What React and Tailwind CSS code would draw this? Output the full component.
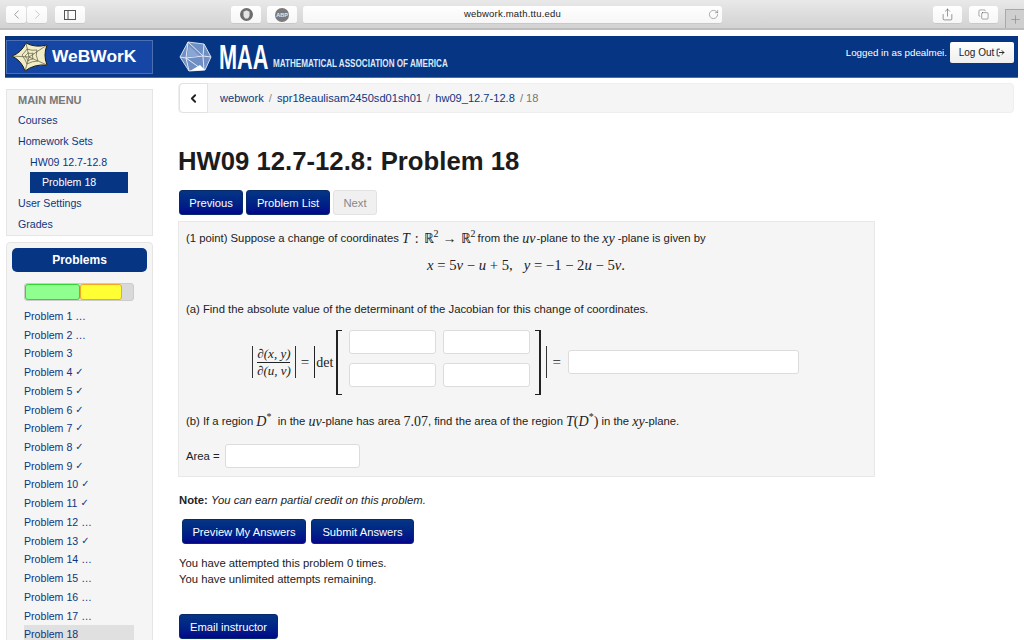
import React from "react";
import { ChevronLeft, ChevronRight, RotateCw, Share, Copy, Plus, LogOut } from "lucide-react";

const sans = "font-['Liberation_Sans',Arial,sans-serif]";
const M = ({ children, className = "" }) => (
  <span className={`font-['Liberation_Serif',serif] italic text-[14px] ${className}`}>{children}</span>
);
const R = ({ children, className = "" }) => (
  <span className={`font-['Liberation_Serif',serif] text-[14px] ${className}`}>{children}</span>
);
const Sup = ({ children }) => (
  <span className="font-['Liberation_Serif',serif] text-[10px] relative -top-[5px]">{children}</span>
);

function ToolBtn({ children, className = "" }) {
  return (
    <div className={`h-[18px] rounded-[3px] bg-gradient-to-b from-white to-[#f6f6f6] border-b border-[#c8c8c8] flex items-center justify-center ${className}`}>
      {children}
    </div>
  );
}

function Star() {
  return (
    <svg width="36" height="30" viewBox="0 0 36 30" className="shrink-0">
      <path d="M0 14 Q9 11 14 1 Q23 6 35 3 Q31 13 35 23 Q22 22 13 29 Q10 19 0 14 Z" fill="#f1edc6" stroke="#1c1c18" strokeWidth="1" strokeLinejoin="round" />
      <path d="M0 14 L17 15 M14 1 L17 15 M35 3 L17 15 M35 23 L17 15 M13 29 L17 15 M10 13 Q13 10 15 7 Q20 9 25 8 Q23 13 26 19 Q20 19 15 22 Q13 17 10 13 Z M13 14 Q15 12 16 11 Q19 12 21 11 Q20 14 21 17 Q18 17 16 19 Q15 16 13 14 Z" fill="none" stroke="#5b5740" strokeWidth="0.7" />
    </svg>
  );
}

function Ico() {
  return (
    <svg width="33" height="31" viewBox="0 0 33 31" className="shrink-0">
      <path d="M9 1 L25 3 L32 16 L26 29 L10 30 L1 16 Z" fill="#6f8fc4" stroke="#d5dfef" strokeWidth="1" />
      <path d="M9 1 L7 17 L1 16 M9 1 L24 15 L25 3 M24 15 L7 17 L24 29 M24 15 L32 16 M24 15 L25 29 M7 17 L10 30" fill="none" stroke="#e3e9f4" strokeWidth="1" />
      <path d="M11 30 L26 29 L21 24 Z" fill="#ffffff" />
      <path d="M10 5 L21 15 L8 16 Z" fill="#8ba6d2" />
    </svg>
  );
}

function Toolbar() {
  return (
    <div className="h-[30px] bg-gradient-to-b from-[#e9e9e9] to-[#d2d2d2] border-b-2 border-[#bdbdbd] flex items-start pt-[6px] pl-[6px] relative">
      <ToolBtn className="w-[20px] mr-px"><ChevronLeft size={15} strokeWidth={1} color="#666" /></ToolBtn>
      <ToolBtn className="w-[20px] mr-[8px]"><ChevronRight size={15} strokeWidth={1} color="#aaa" /></ToolBtn>
      <ToolBtn className="w-[30px] mr-[146px]">
        <svg width="12" height="10" viewBox="0 0 12 10"><rect x="0.5" y="0.5" width="11" height="9" fill="none" stroke="#555" /><path d="M4 0.5 V9.5" stroke="#555" /></svg>
      </ToolBtn>
      <ToolBtn className="w-[30px] mr-[6px]">
        <svg width="13" height="13" viewBox="0 0 13 13">
          <circle cx="6.5" cy="6.5" r="6.5" fill="#6d6d6d" />
          <path d="M3.5 6 V3.5 H4.5 V3 H5.5 V2.5 H7.5 V3 H8.5 V3.5 H9.5 V8 L8 10.5 H5 L3.5 8 Z" fill="#e4e4e4" />
        </svg>
      </ToolBtn>
      <ToolBtn className="w-[30px] mr-[6px]">
        <div className="w-[14px] h-[14px] rounded-full bg-[#7a7a7a] text-[#e8e8e8] text-[5.5px] font-bold leading-[14px] text-center">ABP</div>
      </ToolBtn>
      <ToolBtn className="w-[419px] relative text-[9.5px] text-[#222] tracking-[0.2px]">
        webwork.math.ttu.edu
        <RotateCw size={11} strokeWidth={1} color="#555" className="absolute right-[3px] top-[3px]" />
      </ToolBtn>
      <ToolBtn className="w-[29px] ml-[211px]"><Share size={13} strokeWidth={1} color="#444" /></ToolBtn>
      <ToolBtn className="w-[29px] ml-[7px]"><Copy size={11} strokeWidth={1} color="#444" /></ToolBtn>
      <div className="absolute right-0 bottom-0 w-[19px] h-[19px] bg-[#cfcfcf] border-l border-t border-[#a9a9a9] flex items-center justify-center">
        <Plus size={13} strokeWidth={1} color="#777" />
      </div>
    </div>
  );
}

function Nav() {
  return (
    <div className="ml-[5px] mr-[6px] mt-[6px] h-[42px] bg-[#063583] flex items-center border-b border-[#4a6ca8] pl-px pr-[4px]">
      <div className="w-[147px] h-[34px] bg-[#1546a6] border border-[#4c6fb0] flex items-center pl-[5px] gap-[4px]">
        <Star />
        <span className="text-white font-bold text-[17.4px]">WeBWorK</span>
      </div>
      <div className="ml-[26px] flex items-center h-full">
        <Ico />
        <span className="ml-[7px] w-[49px] text-white font-bold text-[35px] leading-[34px] inline-block origin-left scale-x-[0.62]">MAA</span>
        <span className="ml-[5px] mt-[14px] w-[174px] whitespace-nowrap text-[#dfe7f3] font-bold text-[10px] inline-block origin-left scale-x-[0.81]">MATHEMATICAL ASSOCIATION OF AMERICA</span>
      </div>
      <div className="ml-auto flex items-center gap-[3px] -mt-[9px]">
        <span className="text-white text-[9.8px] mt-[2px]">Logged in as pdealmei.</span>
        <div className="w-[64px] h-[21px] rounded-[2px] bg-gradient-to-b from-white to-[#eeeeee] flex items-center justify-center gap-[2px] text-[#222] text-[10px]">
          Log Out <LogOut size={9} strokeWidth={2.5} />
        </div>
      </div>
    </div>
  );
}

function Sidebar() {
  const items = [
    ["Problem 1", "…"], ["Problem 2", "…"], ["Problem 3", ""], ["Problem 4", "c"], ["Problem 5", "c"], ["Problem 6", "c"],
    ["Problem 7", "c"], ["Problem 8", "c"], ["Problem 9", "c"], ["Problem 10", "c"], ["Problem 11", "c"], ["Problem 12", "…"],
    ["Problem 13", "c"], ["Problem 14", "…"], ["Problem 15", "…"], ["Problem 16", "…"], ["Problem 17", "…"],
  ];
  const link = "h-[20.8px] leading-[20.8px] text-[#0d3580]";
  return (
    <div className="w-[147px] ml-[6px] shrink-0">
      <div className="h-[147px] bg-[#f5f5f5] border border-[#e5e5e5] pl-[11px] text-[10.6px]">
        <div className="h-[20px] leading-[20px] font-bold text-[#777] text-[11px]">MAIN MENU</div>
        <div className={link}>Courses</div>
        <div className={link}>Homework Sets</div>
        <div className={`${link} pl-[12px]`}>HW09 12.7-12.8</div>
        <div className="h-[21px] leading-[21px] w-[98px] ml-[12px] bg-[#063583] text-white pl-[12px]">Problem 18</div>
        <div className={link}>User Settings</div>
        <div className={link}>Grades</div>
      </div>
      <div className="mt-[6px] h-[420px] bg-[#f5f5f5] border border-[#e5e5e5] rounded-t-[4px] pt-[5px] px-[5px]">
        <div className="h-[24px] leading-[24px] w-[135px] bg-[#063583] rounded-[5px] text-white font-bold text-[12px] text-center">Problems</div>
        <div className="mt-[11px] ml-[12px] w-[110px] h-[18px] rounded-[3px] bg-[#d9d9d9] border border-[#cccccc] flex">
          <div className="w-[55px] bg-[#8fff8f] border border-[#33d633] rounded-[3px]" />
          <div className="w-[42px] bg-[#ffff33] border border-[#f5a623] rounded-[3px]" />
        </div>
        <div className="mt-[6px] ml-[12px] w-[110px] text-[10.6px] text-[#0d3580]">
          {items.map(([t, s]) => (
            <div key={t} className="h-[18.72px] leading-[18.72px] flex items-center gap-[3px]">
              {t}
              {s === "c" ? <span className="font-['DejaVu_Sans',sans-serif] text-[10px] font-bold">✓</span> : s ? <span>…</span> : null}
            </div>
          ))}
          <div className="h-[18.72px] leading-[18.72px] bg-[#e0e0e0]">Problem 18</div>
        </div>
      </div>
    </div>
  );
}

function Btn({ children, className = "" }) {
  return (
    <div className={`h-[25px] leading-[24px] rounded-[3px] bg-gradient-to-b from-[#063583] to-[#04048a] border border-[#062a6a] text-white text-[11.2px] text-center ${className}`}>
      {children}
    </div>
  );
}

const Field = ({ className = "" }) => (
  <div className={`bg-white border border-[#dcdcdc] rounded-[3px] ${className}`} />
);

function Bracket({ right }) {
  return (
    <div className={`w-[6px] h-[65px] border-y border-[#222] ${right ? "border-r-2" : "border-l-2"}`} />
  );
}

function Content() {
  return (
    <div className="ml-[25px] w-[836px] text-[#222] text-[11.3px]">
      <div className="mt-[5px] h-[30px] bg-[#f5f5f5] rounded-[4px] border border-[#eeeeee] flex items-center">
        <div className="w-[29px] h-[30px] bg-white border border-[#e2e2e2] rounded-l-[4px] flex items-center justify-center">
          <ChevronLeft size={13} strokeWidth={3.5} color="#222" />
        </div>
        <div className="ml-[12px] text-[11.1px] text-[#0d3580]">
          webwork <span className="text-[#888] mx-[2px]">/</span> spr18eaulisam2450sd01sh01 <span className="text-[#888] mx-[2px]">/</span> hw09_12.7-12.8 <span className="text-[#777] ml-[2px]">/ 18</span>
        </div>
      </div>
      <h1 className="mt-[32px] h-[32px] leading-[32px] text-[25.7px] font-bold text-[#1c1c1c]">HW09 12.7-12.8: Problem 18</h1>
      <div className="mt-[13px] ml-px flex gap-[3px]">
        <Btn className="w-[64px]">Previous</Btn>
        <Btn className="w-[84px]">Problem List</Btn>
        <div className="w-[44px] h-[25px] leading-[24px] rounded-[3px] bg-[#f0f0f0] border border-[#e2e2e2] text-[#888] text-center">Next</div>
      </div>
      <div className="mt-[6px] w-[697px] h-[256px] bg-[#f5f5f5] border border-[#e8e8e8] pl-[7px] pt-[6px]">
        <div className="h-[20px] flex items-center whitespace-pre">
          (1 point) Suppose a change of coordinates<M className="ml-[3px]">T</M><R className="mx-[5px]">:</R><R>ℝ</R><Sup>2</Sup><R className="mx-[4px]">→</R><R>ℝ</R><Sup>2</Sup> <span className="ml-[2px]">from the </span><M>uv</M><span className="ml-px">-plane to the </span><M>xy</M><span className="ml-[3px]">-plane is given by</span>
        </div>
        <div className="mt-[7px] ml-[241px] h-[20px] leading-[20px] whitespace-pre font-['Liberation_Serif',serif] text-[14.7px]">
          <i>x</i> = 5<i>v</i> − <i>u</i> + 5,   <i>y</i> = −1 − 2<i>u</i> − 5<i>v</i>.
        </div>
        <div className="mt-[27px] h-[14px] leading-[14px]">(a) Find the absolute value of the determinant of the Jacobian for this change of coordinates.</div>
        <div className="mt-[12px] ml-[66px] h-[68px] flex items-center font-['Liberation_Serif',serif] text-[13px]">
          <div className="h-[32px] w-px bg-[#333]" />
          <div className="mx-[4px] flex flex-col items-center italic leading-[15px]">
            <span className="border-b border-[#222] pb-px">∂(x, y)</span>
            <span>∂(u, v)</span>
          </div>
          <div className="h-[32px] w-px bg-[#333]" />
          <span className="ml-[5px] mr-[5px] text-[15px]">=</span>
          <div className="h-[32px] w-px bg-[#222]" />
          <span className="ml-px mr-[3px] text-[14px]">det</span>
          <Bracket />
          <div className="ml-[7px] mr-[5px] mb-[7px] grid grid-cols-[87px_87px] gap-x-[7px] gap-y-[9px]">
            <Field className="h-[24px]" />
            <Field className="h-[24px]" />
            <Field className="h-[24px]" />
            <Field className="h-[24px]" />
          </div>
          <Bracket right />
          <div className="ml-[5px] h-[32px] w-px bg-[#333]" />
          <span className="ml-[5px] mr-[7px] text-[15px]">=</span>
          <Field className="w-[231px] h-[24px]" />
        </div>
        <div className="mt-[16px] h-[18px] flex items-center whitespace-pre">
          (b) If a region <M>D</M><Sup>*</Sup>  in the <M>uv</M>-plane has area <R>7.07</R>, find the area of the region <M>T</M><R>(</R><M>D</M><Sup>*</Sup><R>)</R> in the <M>xy</M>-plane.
        </div>
        <div className="mt-[14px] flex items-center gap-[5px]">
          Area =
          <Field className="w-[135px] h-[24px]" />
        </div>
      </div>
      <div className="mt-[16px] ml-px h-[14px] leading-[14px]"><b>Note:</b> <i>You can earn partial credit on this problem.</i></div>
      <div className="mt-[12px] ml-[4px] flex gap-[5px]">
        <Btn className="w-[124px]">Preview My Answers</Btn>
        <Btn className="w-[103px]">Submit Answers</Btn>
      </div>
      <div className="mt-[11px] ml-px leading-[16px]">You have attempted this problem 0 times.<br />You have unlimited attempts remaining.</div>
      <Btn className="mt-[27px] ml-px w-[99px]">Email instructor</Btn>
    </div>
  );
}

export default function App() {
  return (
    <div className={`w-[1024px] h-[640px] overflow-hidden bg-white ${sans}`}>
      <Toolbar />
      <Nav />
      <div className="flex">
        <div className="pt-[11px]"><Sidebar /></div>
        <Content />
      </div>
    </div>
  );
}
